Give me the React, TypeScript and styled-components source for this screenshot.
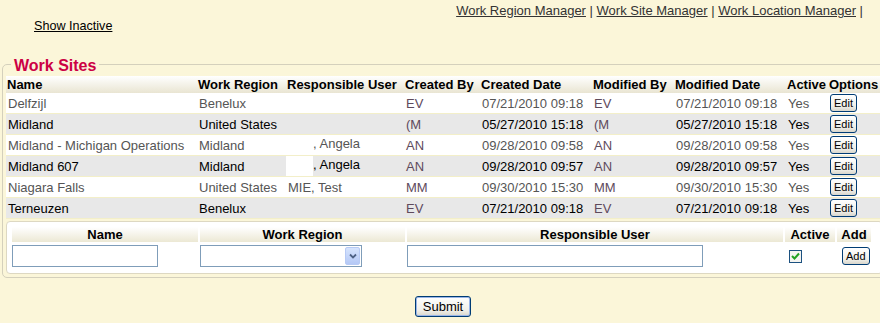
import React from "react";
import styled, { createGlobalStyle } from "styled-components";

const GlobalStyle = createGlobalStyle`
  body {
    margin: 0;
    background: #fbf6d9;
    font-family: "Liberation Sans", Arial, sans-serif;
    font-size: 13px;
    overflow: hidden;
  }
`;

const Page = styled.div`
  width: 880px;
  height: 323px;
  overflow: hidden;
`;

const TopLinks = styled.div`
  text-align: right;
  padding: 3px 17px 0 0;
  line-height: 15px;
  color: #333;
  a {
    color: #333;
    text-decoration: underline;
  }
`;

const InactiveLink = styled.a`
  display: block;
  margin: 1px 0 0 34px;
  width: max-content;
  color: #000;
  font-size: 12.6px;
  line-height: 15px;
  text-decoration: underline;
`;

const Fieldset = styled.fieldset`
  margin: 20px 0 0 2px;
  padding: 2px 0 3px 3px;
  width: 900px;
  border: 1px solid #d4d0bc;
  border-radius: 5px;
`;

const Legend = styled.legend`
  margin-left: 5px;
  padding: 4px 3px 0;
  color: #cc0044;
  font-weight: bold;
  font-size: 16px;
  line-height: 16px;
`;

const DataTable = styled.table`
  border-collapse: separate;
  border-spacing: 0;
  table-layout: fixed;
  width: 876px;
`;

const HeadCell = styled.th`
  height: 17px;
  padding: 0 0 0 1px;
  text-align: left;
  font-weight: bold;
  white-space: nowrap;
  color: #000;
  background: linear-gradient(#ffffff, #e9e5d2);
`;

const Row = styled.tr<{ $alt: boolean }>`
  background: ${(p) => (p.$alt ? "#e8e8e8" : "#ffffff")};
  color: ${(p) => (p.$alt ? "#000" : "#555")};
  td {
    height: 20px;
    padding: 0 0 0 2px;
    border-bottom: 1px solid #f3efc9;
    white-space: nowrap;
    overflow: hidden;
  }
`;

const ByCell = styled.td`
  color: #5e4a5c;
`;

const Redacted = styled.span<{ $w: number }>`
  display: inline-block;
  width: ${(p) => p.$w}px;
  height: 20px;
  vertical-align: middle;
  background: #fff;
  margin-left: -2px;
`;

const OptionCell = styled.td`
  && {
    padding-left: 2px;
  }
`;

const XpButton = styled.button<{ $small?: boolean }>`
  font-family: "Liberation Sans", Arial, sans-serif;
  font-size: ${(p) => (p.$small ? "11px" : "13px")};
  color: #000;
  height: ${(p) => (p.$small ? "18px" : "21px")};
  padding: ${(p) => (p.$small ? "0 3px" : "0 7px")};
  border: 1px solid #003c74;
  border-radius: 3px;
  background: linear-gradient(#ffffff, #f0efe9 70%, #d8d6cc);
  box-shadow: ${(p) => (p.$small ? "none" : "inset 0 0 0 1px #9ab5e8")};
  line-height: 1;
  vertical-align: middle;
`;

const AddBox = styled.div`
  margin-top: 2px;
  width: 872px;
  background: #fff;
  border: 1px solid #ddd8c2;
  border-radius: 4px;
  padding: 5px 0 6px 3px;
`;

const AddTable = styled.table`
  border-collapse: separate;
  border-spacing: 2px 0;
  table-layout: fixed;
`;

const AddHead = styled.th<{ $w: number }>`
  width: ${(p) => p.$w}px;
  height: 15px;
  padding: 0;
  font-weight: bold;
  text-align: center;
  background: linear-gradient(#ffffff, #ece8d4);
`;

const InputCell = styled.td<{ $pad?: number }>`
  padding: 3px 0 0 ${(p) => p.$pad ?? 0}px;
  height: 22px;
`;

const TextInput = styled.input<{ $w: number }>`
  box-sizing: border-box;
  width: ${(p) => p.$w}px;
  height: 22px;
  border: 1px solid #7f9db9;
  background: #fff;
  display: block;
`;

const SelectBox = styled.div`
  box-sizing: border-box;
  width: 162px;
  height: 22px;
  border: 1px solid #7f9db9;
  background: #fff;
  display: flex;
  justify-content: flex-end;
  padding: 1px;
`;

const SelectArrow = styled.div`
  width: 15px;
  height: 18px;
  border-radius: 2px;
  background: linear-gradient(#d6e4fd, #b4c8f6);
  border: 1px solid #b7caf5;
  box-sizing: border-box;
  display: flex;
  align-items: center;
  justify-content: center;
`;

const CheckBox = styled.div`
  width: 11px;
  height: 11px;
  border: 1px solid #1c5180;
  background: #f4f4f0;
  display: flex;
  align-items: center;
  justify-content: center;
`;

const SubmitRow = styled.div`
  margin-top: 18px;
  padding-left: 6px;
  text-align: center;
`;

interface Site {
  name: string;
  region: string;
  user: React.ReactNode;
  createdBy: string;
  created: string;
  modifiedBy: string;
  modified: string;
}

const sites: Site[] = [
  { name: "Delfzijl", region: "Benelux", user: "", createdBy: "EV", created: "07/21/2010 09:18", modifiedBy: "EV", modified: "07/21/2010 09:18" },
  { name: "Midland", region: "United States", user: "", createdBy: "(M", created: "05/27/2010 15:18", modifiedBy: "(M", modified: "05/27/2010 15:18" },
  { name: "Midland - Michigan Operations", region: "Midland", user: <><Redacted $w={27} />, Angela</>, createdBy: "AN", created: "09/28/2010 09:58", modifiedBy: "AN", modified: "09/28/2010 09:58" },
  { name: "Midland 607", region: "Midland", user: <><Redacted $w={27} />, Angela</>, createdBy: "AN", created: "09/28/2010 09:57", modifiedBy: "AN", modified: "09/28/2010 09:57" },
  { name: "Niagara Falls", region: "United States", user: "MIE, Test", createdBy: "MM", created: "09/30/2010 15:30", modifiedBy: "MM", modified: "09/30/2010 15:30" },
  { name: "Terneuzen", region: "Benelux", user: "", createdBy: "EV", created: "07/21/2010 09:18", modifiedBy: "EV", modified: "07/21/2010 09:18" },
];

const columns = [
  { label: "Name", w: 191 },
  { label: "Work Region", w: 89 },
  { label: "Responsible User", w: 118 },
  { label: "Created By", w: 76 },
  { label: "Created Date", w: 112 },
  { label: "Modified By", w: 82 },
  { label: "Modified Date", w: 112 },
  { label: "Active", w: 42 },
  { label: "Options", w: 54 },
];

const App: React.FC = () => {
  return (
    <Page>
      <GlobalStyle />
      <TopLinks>
        <a href="#">Work Region Manager</a> | <a href="#">Work Site Manager</a> |{" "}
        <a href="#">Work Location Manager</a> |
      </TopLinks>
      <InactiveLink href="#">Show Inactive</InactiveLink>

      <Fieldset>
        <Legend>Work Sites</Legend>
        <DataTable>
          <colgroup>
            {columns.map((c) => (
              <col key={c.label} style={{ width: c.w }} />
            ))}
          </colgroup>
          <thead>
            <tr>
              {columns.map((c) => (
                <HeadCell key={c.label}>{c.label}</HeadCell>
              ))}
            </tr>
          </thead>
          <tbody>
            {sites.map((s, i) => (
              <Row key={s.name} $alt={i % 2 === 1}>
                <td>{s.name}</td>
                <td>{s.region}</td>
                <td>{s.user}</td>
                <ByCell>{s.createdBy}</ByCell>
                <td>{s.created}</td>
                <ByCell>{s.modifiedBy}</ByCell>
                <td>{s.modified}</td>
                <td>Yes</td>
                <OptionCell>
                  <XpButton $small>Edit</XpButton>
                </OptionCell>
              </Row>
            ))}
          </tbody>
        </DataTable>

        <AddBox>
          <AddTable>
            <thead>
              <tr>
                <AddHead $w={186}>Name</AddHead>
                <AddHead $w={205}>Work Region</AddHead>
                <AddHead $w={376}>Responsible User</AddHead>
                <AddHead $w={50}>Active</AddHead>
                <AddHead $w={34}>Add</AddHead>
              </tr>
            </thead>
            <tbody>
              <tr>
                <InputCell>
                  <TextInput $w={146} />
                </InputCell>
                <InputCell>
                  <SelectBox>
                    <SelectArrow>
                      <svg width="8" height="6" viewBox="0 0 8 6">
                        <path d="M1 1.5 L4 4.5 L7 1.5" fill="none" stroke="#4d6185" strokeWidth="1.8" />
                      </svg>
                    </SelectArrow>
                  </SelectBox>
                </InputCell>
                <InputCell>
                  <TextInput $w={296} />
                </InputCell>
                <InputCell $pad={4}>
                  <CheckBox>
                    <svg width="9" height="8" viewBox="0 0 9 8">
                      <path d="M1 4 L3.5 6.5 L8 1.5" fill="none" stroke="#21a121" strokeWidth="2" />
                    </svg>
                  </CheckBox>
                </InputCell>
                <InputCell $pad={5}>
                  <XpButton $small>Add</XpButton>
                </InputCell>
              </tr>
            </tbody>
          </AddTable>
        </AddBox>
      </Fieldset>

      <SubmitRow>
        <XpButton>Submit</XpButton>
      </SubmitRow>
    </Page>
  );
};

export default App;
